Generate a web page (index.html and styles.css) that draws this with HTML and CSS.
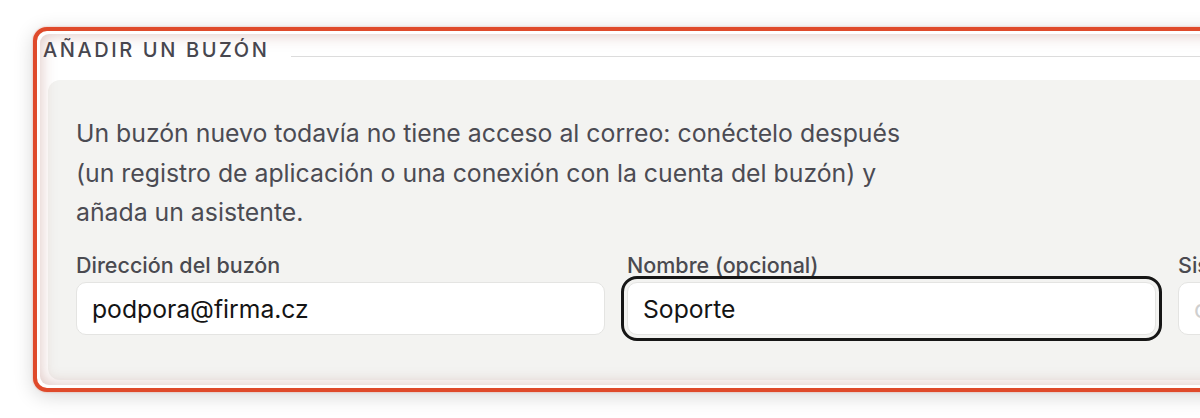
FILE: index.html
```html
<!DOCTYPE html>
<html lang="es">
<head>
<meta charset="utf-8">
<title>Añadir un buzón</title>
<link rel="stylesheet" href="styles.css">
</head>
<body>
  <div class="highlight">
    <section class="sec">
      <div class="sec-head">
        <h2 class="sec-title">Añadir un buzón</h2>
        <div class="rule"></div>
      </div>
      <div class="panel">
        <p class="intro">Un buzón nuevo todavía no tiene acceso al correo: conéctelo después (un registro de aplicación o una conexión con la cuenta del buzón) y añada un asistente.</p>
        <div class="fields">
          <label class="field">
            <span class="field-label">Dirección del buzón</span>
            <span class="input">podpora@firma.cz</span>
          </label>
          <label class="field">
            <span class="field-label">Nombre (opcional)</span>
            <span class="input input-focus">Soporte</span>
          </label>
          <label class="field">
            <span class="field-label">Sistema</span>
            <span class="input input-placeholder">opcional</span>
          </label>
        </div>
      </div>
    </section>
  </div>
</body>
</html>
```

FILE: styles.css
```css
html, body {
  margin: 0;
  padding: 0;
  background: #ffffff;
  overflow: hidden;
}

body {
  width: 1200px;
  height: 418px;
  font-family: Inter, "Noto Sans", "Liberation Sans", sans-serif;
}

.highlight {
  margin: 27px 0 0 33px;
  width: 1400px;
  border: 4px solid #df4a2b;
  border-radius: 14px;
  padding: 3px;
  background: #ffffff;
  box-shadow: 0 0 2px rgba(223, 74, 43, 0.45), 0 4px 20px rgba(0, 0, 0, 0.16);
}

.sec {
  position: relative;
  border-radius: 9px;
  padding: 4px 0 5px 3px;
}

.sec::after {
  content: "";
  position: absolute;
  inset: 0;
  border-radius: 9px;
  box-shadow: inset 0 0 16px rgba(150, 70, 60, 0.34);
  pointer-events: none;
}

.sec-head {
  display: flex;
  align-items: flex-end;
  gap: 22px;
}

.sec-title {
  margin: 0;
  font-size: 20px;
  line-height: 24px;
  font-weight: 500;
  letter-spacing: 2.6px;
  text-transform: uppercase;
  color: #47474f;
  white-space: nowrap;
}

.rule {
  flex: 1;
  height: 1px;
  background: #dcdcdc;
  margin-bottom: 5px;
}

.panel {
  margin: 18px 0 0 5px;
  background: #f3f3f1;
  border-radius: 12px 0 0 12px;
  padding: 34px 0 45px 28px;
}

.intro {
  margin: 0;
  max-width: 850px;
  font-size: 24.8px;
  line-height: 39.5px;
  color: #4b4b53;
}

.fields {
  margin-top: 19.5px;
  display: grid;
  grid-template-columns: 529px 529px 529px;
  column-gap: 22px;
}

.field {
  display: flex;
  flex-direction: column;
  gap: 4px;
}

.field-label {
  font-size: 21.5px;
  line-height: 26px;
  font-weight: 500;
  color: #4a4a50;
}

.input {
  box-sizing: border-box;
  height: 53px;
  display: flex;
  align-items: center;
  padding: 0 15px;
  background: #ffffff;
  border: 1px solid #e4e4e2;
  border-radius: 10px;
  font-size: 24.7px;
  color: #141414;
}

.input-placeholder {
  color: #cfcfcf;
}

.input-focus {
  outline: 3px solid #161616;
  outline-offset: 3px;
}
```
